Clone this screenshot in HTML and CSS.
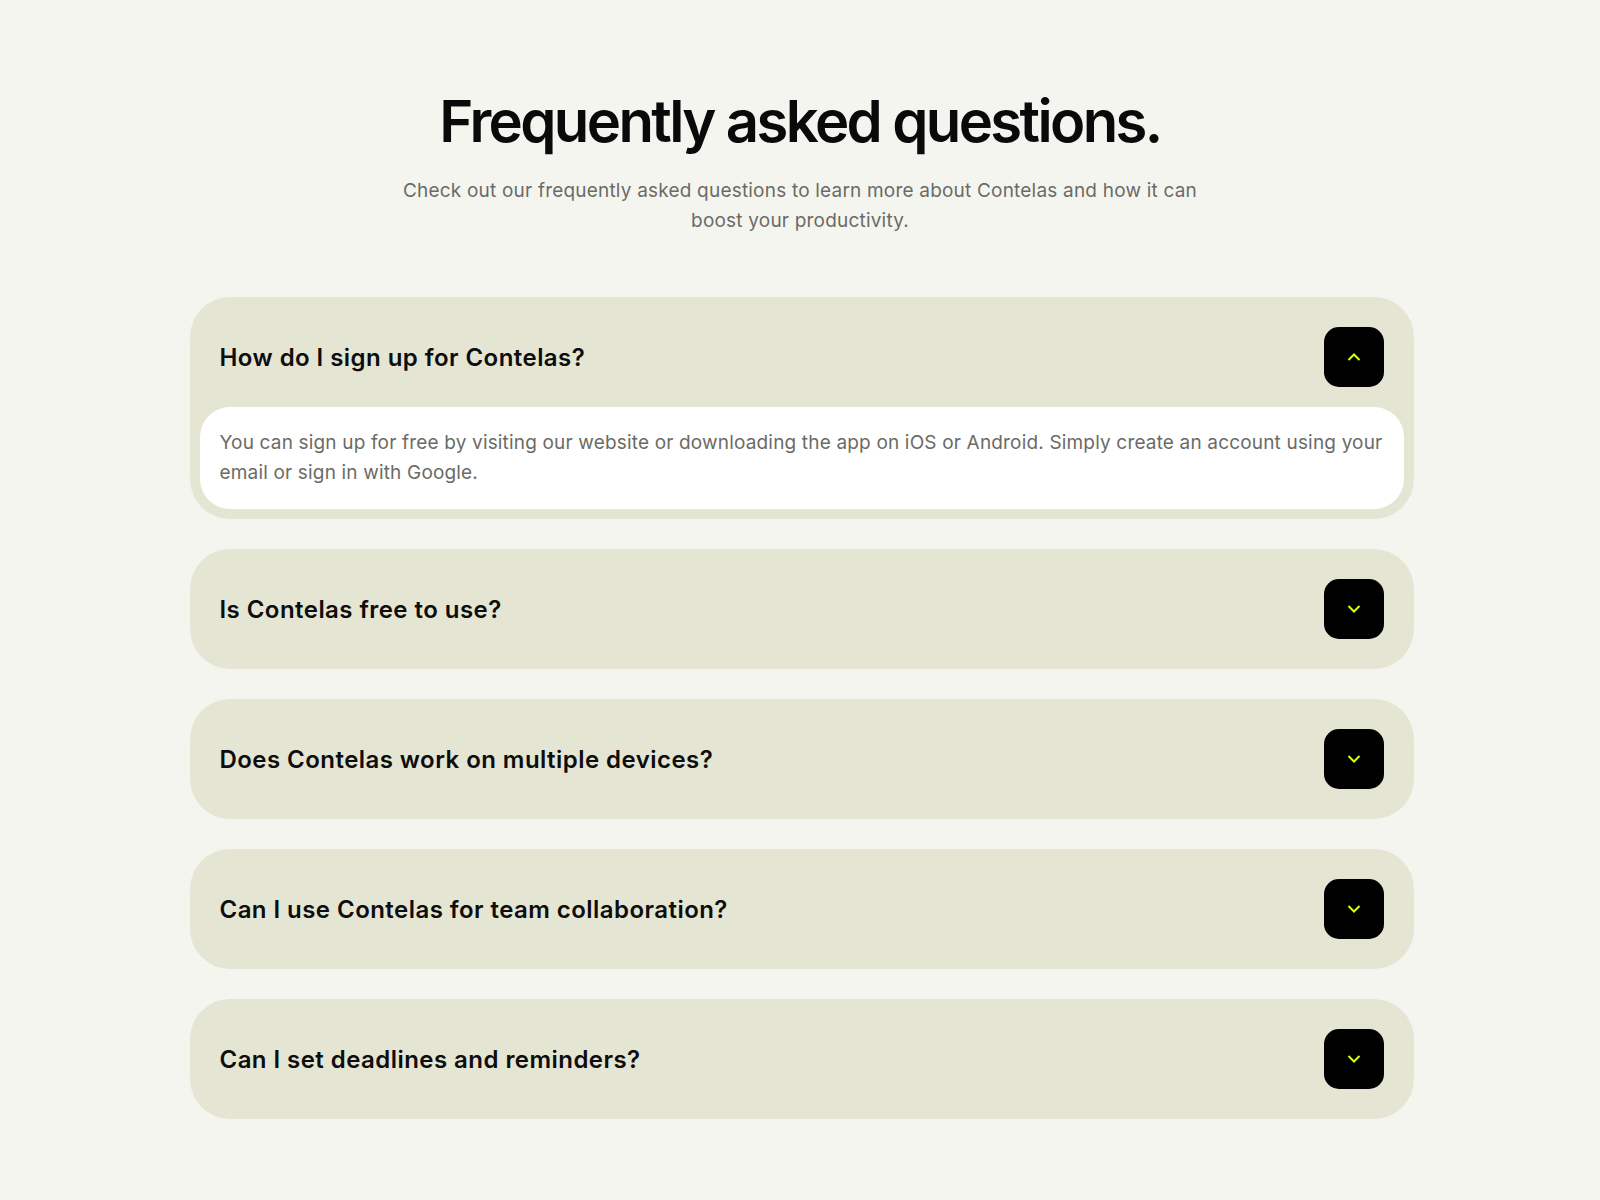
FILE: index.html
```html
<!DOCTYPE html>
<html lang="en">
<head>
<meta charset="utf-8">
<title>FAQ</title>
<link rel="stylesheet" href="styles.css">
</head>
<body>
<section class="faq">
  <h1 class="faq-title">Frequently asked questions.</h1>
  <p class="faq-sub">Check out our frequently asked questions to learn more about Contelas and how it can boost your productivity.</p>
  <div class="faq-list">
    <div class="item open">
      <div class="item-head">
        <span class="q">How do I sign up for Contelas?</span>
        <span class="btn"><svg width="14" height="8" viewBox="0 0 14 8"><path d="M1.5 7 L7 1.5 L12.5 7" fill="none" stroke="#d9ff00" stroke-width="2"/></svg></span>
      </div>
      <div class="answer">You can sign up for free by visiting our website or downloading the app on iOS or Android. Simply create an account using your email or sign in with Google.</div>
    </div>
    <div class="item">
      <div class="item-head">
        <span class="q">Is Contelas free to use?</span>
        <span class="btn"><svg width="14" height="8" viewBox="0 0 14 8"><path d="M1.5 1 L7 6.5 L12.5 1" fill="none" stroke="#d9ff00" stroke-width="2"/></svg></span>
      </div>
    </div>
    <div class="item">
      <div class="item-head">
        <span class="q">Does Contelas work on multiple devices?</span>
        <span class="btn"><svg width="14" height="8" viewBox="0 0 14 8"><path d="M1.5 1 L7 6.5 L12.5 1" fill="none" stroke="#d9ff00" stroke-width="2"/></svg></span>
      </div>
    </div>
    <div class="item">
      <div class="item-head">
        <span class="q">Can I use Contelas for team collaboration?</span>
        <span class="btn"><svg width="14" height="8" viewBox="0 0 14 8"><path d="M1.5 1 L7 6.5 L12.5 1" fill="none" stroke="#d9ff00" stroke-width="2"/></svg></span>
      </div>
    </div>
    <div class="item">
      <div class="item-head">
        <span class="q">Can I set deadlines and reminders?</span>
        <span class="btn"><svg width="14" height="8" viewBox="0 0 14 8"><path d="M1.5 1 L7 6.5 L12.5 1" fill="none" stroke="#d9ff00" stroke-width="2"/></svg></span>
      </div>
    </div>
  </div>
</section>
</body>
</html>
```

FILE: styles.css
```css
* { box-sizing: border-box; }
html, body {
  margin: 0;
  padding: 0;
  background: #f5f5f0;
  font-family: Inter, "Liberation Sans", sans-serif;
}
.faq {
  display: flex;
  flex-direction: column;
  align-items: center;
  padding-top: 86px;
}
.faq-title {
  margin: 0;
  font-size: 58px;
  line-height: 70px;
  font-weight: 600;
  letter-spacing: -0.045em;
  color: #0a0a0a;
}
.faq-sub {
  margin: 20px 0 0;
  max-width: 820px;
  text-align: center;
  font-size: 19px;
  line-height: 30px;
  letter-spacing: 0.2px;
  color: #6b6b66;
}
.faq-list {
  margin-top: 61px;
  width: 1224px;
  display: flex;
  flex-direction: column;
  gap: 30px;
  margin-left: 3px;
}
.item {
  background: #e5e5d4;
  border-radius: 40px;
  padding: 30px 10px;
}
.item.open { padding-bottom: 10px; }
.item-head {
  display: flex;
  align-items: center;
  justify-content: space-between;
  padding: 0 20px;
}
.q {
  font-size: 24px;
  font-weight: 600;
  color: #0d0d0d;
  letter-spacing: 0.45px;
}
.btn {
  width: 60px;
  height: 60px;
  border-radius: 15px;
  background: #000;
  display: flex;
  align-items: center;
  justify-content: center;
}
.answer {
  margin-top: 20px;
  background: #fff;
  border-radius: 30px;
  padding: 21px 20px;
  font-size: 19px;
  line-height: 30px;
  letter-spacing: 0.17px;
  color: #6b6b66;
}
```
